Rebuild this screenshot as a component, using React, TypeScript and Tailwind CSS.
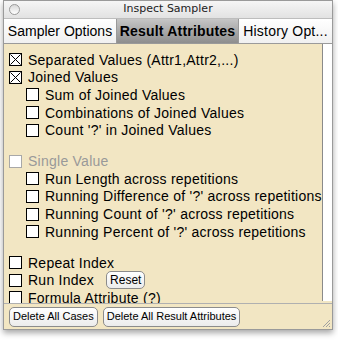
import React from 'react';

const Box: React.FC<{ checked?: boolean; dim?: boolean }> = ({ checked, dim }) => (
  <span
    className={`inline-flex w-[13px] h-[13px] shrink-0 items-center justify-center bg-white border ${dim ? 'border-[#a8a8a8]' : 'border-black'}`}
  >
    {checked && (
      <svg width="11" height="11" viewBox="0 0 11 11">
        <path d="M0.5 0.5 L10.5 10.5 M10.5 0.5 L0.5 10.5" stroke="#000" strokeWidth="1" />
      </svg>
    )}
  </span>
);

const Row: React.FC<{ label: string; checked?: boolean; indent?: boolean; dim?: boolean; children?: React.ReactNode }> = ({
  label,
  checked,
  indent,
  dim,
  children,
}) => (
  <div className={`flex items-center h-[17.6px] gap-[6px] ${indent ? 'pl-[17px]' : ''}`}>
    <Box checked={checked} dim={dim} />
    <span className={`whitespace-nowrap ${dim ? 'text-[#999]' : 'text-black'}`}>{label}</span>
    {children}
  </div>
);

const Button: React.FC<{ label: string; small?: boolean }> = ({ label, small }) => (
  <button
    className={`rounded-[5px] border border-[#8c8c8c] bg-gradient-to-b from-white to-[#ececec] text-black leading-none whitespace-nowrap ${small ? 'px-[3px] h-[18px] text-[12px]' : 'px-[3px] h-[20px] text-[11px]'}`}
  >
    {label}
  </button>
);

const App: React.FC = () => {
  return (
    <div className="w-[338px] h-[340px] bg-white pl-[3px] pt-0" style={{ fontFamily: '"Liberation Sans", Arial, sans-serif' }}>
      <div className="w-[330px] h-[330px] flex flex-col border border-[#9a9a9a] bg-[#f2e6c3] shadow-[0_3px_6px_rgba(0,0,0,0.35)]">
        {/* title bar */}
        <div className="relative h-[18px] bg-gradient-to-b from-[#f6f6f6] to-[#e2e2e2] border-b border-[#bdbdbd] flex items-center justify-center">
          <span className="absolute left-[5px] top-[3px] w-[11px] h-[11px] rounded-full border border-[#9a9a9a] bg-gradient-to-b from-[#d8d8d8] to-white" />
          <span className="text-[11px] text-[#222]" style={{ fontFamily: '"DejaVu Sans", sans-serif' }}>Inspect Sampler</span>
        </div>
        {/* tabs */}
        <div className="flex h-[25px] bg-white border-b border-[#9a9a9a] text-[14px] leading-none">
          <div className="w-[113px] flex items-center justify-center border-r border-[#9a9a9a] bg-gradient-to-b from-white to-[#f0f0f0]">
            Sampler Options
          </div>
          <div className="w-[122px] flex items-center justify-center border-r border-[#9a9a9a] bg-gradient-to-b from-[#c6c6c6] to-[#8e8e8e] font-bold tracking-[0.2px]">
            Result Attributes
          </div>
          <div className="flex-1 flex items-center justify-center bg-gradient-to-b from-white to-[#f0f0f0] tracking-[0.2px]">
            History Opt...
          </div>
        </div>
        {/* content */}
        <div className="flex-1 flex min-h-0">
          <div className="flex-1 overflow-hidden pl-[5px] pt-[7px] text-[14px] tracking-[0.25px] leading-none">
            <Row label="Separated Values (Attr1,Attr2,...)" checked />
            <Row label="Joined Values" checked />
            <Row label="Sum of Joined Values" indent />
            <Row label="Combinations of Joined Values" indent />
            <Row label="Count '?' in Joined Values" indent />
            <div className="h-[13.5px]" />
            <Row label="Single Value" dim />
            <Row label="Run Length across repetitions" indent />
            <Row label="Running Difference of '?' across repetitions" indent />
            <Row label="Running Count of '?' across repetitions" indent />
            <Row label="Running Percent of '?' across repetitions" indent />
            <div className="h-[13.5px]" />
            <Row label="Repeat Index" />
            <Row label="Run Index">
              <span className="ml-[6px] tracking-normal">
                <Button label="Reset" small />
              </span>
            </Row>
            <Row label="Formula Attribute (?)" />
          </div>
          <div className="w-[10px] bg-white border-l border-[#8a8a8a] mb-[2px]" />
        </div>
        {/* bottom bar */}
        <div className="relative h-[26px] border-t border-[#b0b0b0] flex items-center gap-[5px] pl-[5px]">
          <Button label="Delete All Cases" />
          <Button label="Delete All Result Attributes" />
          <svg className="absolute right-[1px] bottom-[1px]" width="11" height="11" viewBox="0 0 11 11">
            <path d="M10 3 L3 10 M10 6 L6 10 M10 9 L9 10" stroke="#a0a0a0" strokeWidth="1" />
          </svg>
        </div>
      </div>
    </div>
  );
};

export default App;
